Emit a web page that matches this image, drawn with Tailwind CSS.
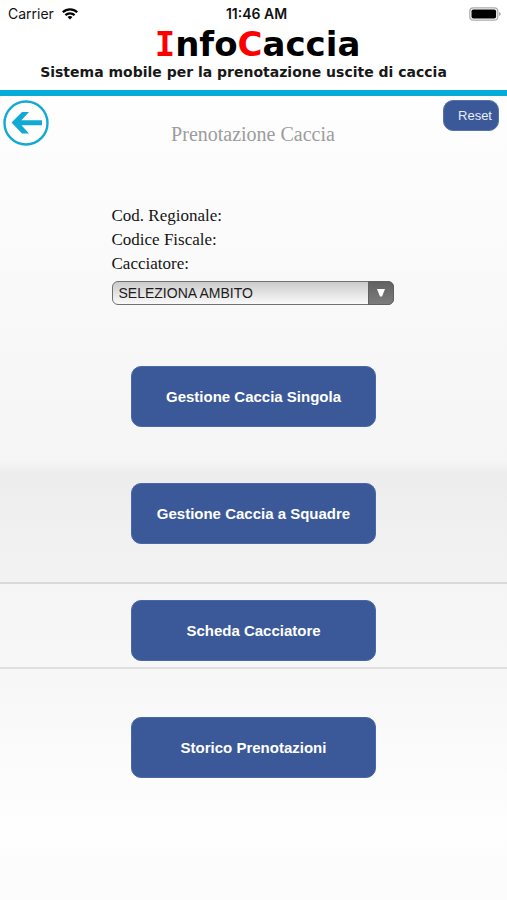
<!DOCTYPE html>
<html lang="it">
<head>
<meta charset="utf-8">
<meta name="viewport" content="width=device-width, initial-scale=1">
<title>InfoCaccia</title>
<script src="https://cdn.jsdelivr.net/npm/@tailwindcss/browser@4"></script>
</head>
<body class="flex min-h-screen flex-col bg-white font-['Liberation_Sans',sans-serif]">
  <header class="border-b-6 border-[#05acd7] pb-1.5">
    <div class="grid h-7 grid-cols-3 items-center pr-1.5 pl-2 font-['Inter',sans-serif] text-sm text-[#111]">
      <div class="flex items-center gap-2">
        <span>Carrier</span>
        <svg class="h-3 w-4" viewBox="0 0 16 12" fill="none" stroke="#000" stroke-width="2.2" aria-hidden="true">
          <path d="M.8 4.200C4.900.3 11.100.3 15.200 4.200"/>
          <path d="M3.400 7.100C6 4.700 10 4.700 12.600 7.100"/>
          <path d="M5.500 9 Q8 7 10.500 9 L8 11.600Z" fill="#000" stroke="none"/>
        </svg>
      </div>
      <span class="pl-1 text-center font-semibold whitespace-nowrap">11:46 AM</span>
      <svg class="h-3.5 w-8 justify-self-end" viewBox="0 0 32 14" aria-hidden="true">
        <rect x=".8" y=".8" width="28" height="12.400" rx="3.500" fill="#fff" stroke="#aaa" stroke-width="1.200"/>
        <rect x="2.500" y="2.500" width="24.600" height="9" rx="1.800" fill="#000"/>
        <path d="M30.200 5v4q1.500-.6 1.500-2t-1.500-2z" fill="#999"/>
      </svg>
    </div>
    <h1 class="pl-2 text-center font-['DejaVu_Sans',sans-serif] text-[34px] leading-8 font-bold text-black"><span class="font-['DejaVu_Sans_Mono',monospace] text-[#f00]">I</span>nfo<span class="text-[#f00]">C</span>accia</h1>
    <p class="pr-5 text-center font-['DejaVu_Sans',sans-serif] text-sm leading-6 font-bold whitespace-nowrap text-[#181818]">Sistema mobile per la prenotazione uscite di caccia</p>
  </header>

  <main class="flex-1 bg-[linear-gradient(#fefefe_0px,#f5f5f5_365px,#ededed_378px,#f3f3f3_486px,#d9d9d9_486px,#d9d9d9_488px,#f5f5f5_488px,#f7f7f7_571px,#dfdfdf_571px,#dfdfdf_573px,#f7f7f7_573px,#fefefe_735px,#fcfcfc_775px)] pb-10">
    <div class="grid grid-cols-[1fr_auto_1fr] items-start pt-1 pr-1 pl-[3px]">
      <a href="#" aria-label="Indietro" class="block size-[46px]">
        <svg class="size-full" viewBox="0 0 46 46" aria-hidden="true">
          <circle cx="23" cy="23" r="21.500" fill="#fff" stroke="#12a9d5" stroke-width="2.400"/>
          <path d="M8.500 22.500 19 12H26L18.500 20.200H39V25.200H18.500L26 33.500H19Z" fill="#12a9d5"/>
        </svg>
      </a>
      <h2 class="pt-5 font-['Liberation_Serif',serif] text-xl leading-7 text-[#9c9c9c]">Prenotazione Caccia</h2>
      <button type="button" class="mr-1 h-[31px] w-14 justify-self-end rounded-[10px] border border-[#5573ae] bg-[#3b5998] pl-2 text-[13px] text-[#e8edf8]">Reset</button>
    </div>

    <div class="pr-0.5">
      <form class="mx-auto mt-14 w-[282px]">
        <div class="font-['Liberation_Serif',serif] text-[17px] leading-6 text-[#151515]">
          <p>Cod. Regionale:</p>
          <p>Codice Fiscale:</p>
          <p>Cacciatore:</p>
        </div>
        <div class="relative mt-[5px]">
          <select aria-label="Ambito" class="block h-6 w-full appearance-none rounded-md border border-[#707070] bg-linear-to-b from-[#cbcbcb] to-[#fafafa] pr-8 pl-1.5 text-sm leading-5 text-[#1c1c1c]">
            <option>SELEZIONA AMBITO</option>
          </select>
          <span class="pointer-events-none absolute inset-y-0 right-0 flex w-6.5 items-center justify-center rounded-r-md border border-[#606060] bg-linear-to-b from-[#626262] to-[#7c7c7c]">
            <svg class="size-2" viewBox="0 0 8 8" aria-hidden="true"><path d="M0 0H8L5 7.500H3Z" fill="#fff"/></svg>
          </span>
        </div>
      </form>
    </div>

    <nav class="mx-auto mt-[61px] flex w-[245px] flex-col gap-14 text-[15px] font-bold text-white">
      <button type="button" class="h-[61px] rounded-[10px] border border-[#4a68a5] bg-[#3b5998] pt-0.5">Gestione Caccia Singola</button>
      <button type="button" class="h-[61px] rounded-[10px] border border-[#4a68a5] bg-[#3b5998] pt-0.5">Gestione Caccia a Squadre</button>
      <button type="button" class="h-[61px] rounded-[10px] border border-[#4a68a5] bg-[#3b5998] pt-0.5">Scheda Cacciatore</button>
      <button type="button" class="h-[61px] rounded-[10px] border border-[#4a68a5] bg-[#3b5998] pt-0.5">Storico Prenotazioni</button>
    </nav>
  </main>
</body>
</html>
